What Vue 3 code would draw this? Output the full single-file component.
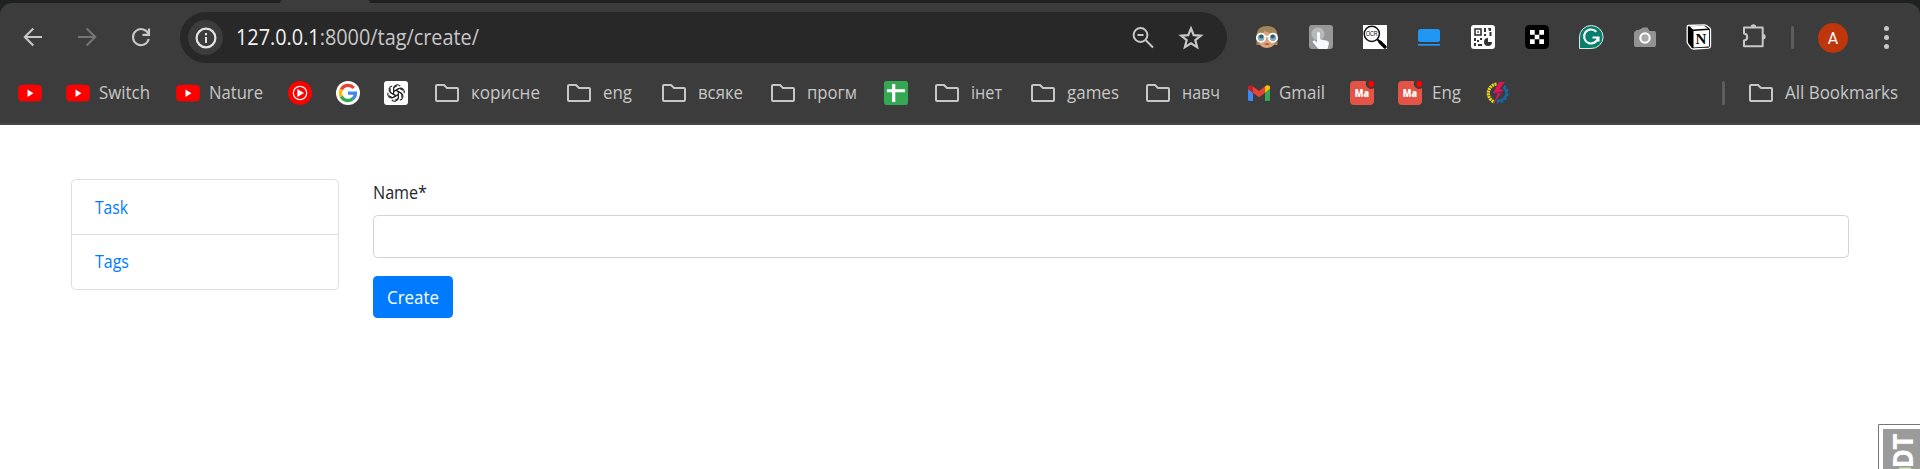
<script setup>
import { h } from 'vue'

// Text run drawn at a fixed advance width; y is the baseline inside the box.
const Label = (p) =>
  h('svg', { width: p.w, height: p.box || 30, style: { display: 'block', overflow: 'visible', flex: 'none' } }, [
    h('text', {
      x: 0, y: p.y || 21, textLength: p.w, lengthAdjust: 'spacingAndGlyphs',
      'font-size': p.size || 17.5, 'font-family': '"Open Sans", "Noto Sans", sans-serif', fill: p.fill || '#c7c7c7',
    }, p.text),
  ])
Label.props = ['w', 'box', 'y', 'size', 'fill', 'text']

const bookmarks = [
  { icon: 'youtube', slot: 48 },
  { icon: 'youtube', text: 'Switch', w: 51, slot: 110 },
  { icon: 'youtube', text: 'Nature', w: 54, slot: 112 },
  { icon: 'music', slot: 48 },
  { icon: 'google', slot: 48 },
  { icon: 'gpt', slot: 51 },
  { icon: 'folder', text: 'корисне', w: 69, slot: 132 },
  { icon: 'folder', text: 'eng', w: 29, slot: 95 },
  { icon: 'folder', text: 'всяке', w: 45, slot: 109 },
  { icon: 'folder', text: 'прогм', w: 50, slot: 113 },
  { icon: 'sheet', slot: 51 },
  { icon: 'folder', text: 'інет', w: 31, slot: 96 },
  { icon: 'folder', text: 'games', w: 52, slot: 115 },
  { icon: 'folder', text: 'навч', w: 38, slot: 102 },
  { icon: 'gmail', text: 'Gmail', w: 46, slot: 102 },
  { icon: 'mate', slot: 48 },
  { icon: 'mate', text: 'Eng', w: 29, slot: 88 },
  { icon: 'gear', slot: 29 },
]
</script>

<template>
  <div class="window">
    <header class="chrome">
      <div class="tabs"><span class="tab"></span></div>
      <div class="panel">
        <div class="toolbar">
          <span class="slot"><svg width="24" height="24" viewBox="0 0 24 24" fill="none" stroke="#c7c7c7" stroke-width="2.1"><path d="M21 12H4.5M12.3 3.5 3.8 12l8.5 8.5" /></svg></span>
          <span class="slot"><svg width="24" height="24" viewBox="0 0 24 24" fill="none" stroke="#757575" stroke-width="2.1"><path d="M3 12h16.5M11.7 3.5l8.5 8.5-8.5 8.5" /></svg></span>
          <span class="slot"><svg width="24" height="24" viewBox="0 0 24 24" fill="none" stroke="#c7c7c7" stroke-width="2.1"><path d="M19.6 9.5A8 8 0 1 0 19.8 14M20 3.5v6.4h-6.5" /></svg></span>
          <div class="omnibox">
            <span class="info"><svg width="24" height="24" viewBox="0 0 24 24"><circle cx="12" cy="12" r="9.4" fill="none" stroke="#e3e3e3" stroke-width="2.2" /><path d="M11 7h2v2.2h-2zM11 11h2v6h-2z" fill="#e3e3e3" /></svg></span>
            <svg class="url" width="243" height="30">
              <text x="0" y="22" textLength="243" lengthAdjust="spacingAndGlyphs" font-size="21" font-family="'Open Sans', 'Noto Sans', sans-serif" fill="#c7c7c7"><tspan fill="#f2f2f2">127.0.0.1</tspan>:8000/tag/create/</text>
            </svg>
            <svg class="zoom" width="24" height="24" viewBox="0 0 24 24" fill="none" stroke="#c7c7c7" stroke-width="2"><circle cx="9.5" cy="9" r="6.9" /><path d="M14.5 14 22 21.500M6.500 9h6" /></svg>
            <svg class="star" width="26" height="26" viewBox="0 0 26 26"><path d="M13 3.400l2.700 6.700 7.100.5-5.500 4.500 1.800 7-6.100-3.800-6.100 3.800 1.800-7-5.500-4.500 7.100-.5z" fill="none" stroke="#c7c7c7" stroke-width="2.200" /></svg>
          </div>
          <div class="extensions">
            <span class="slot"><svg width="24" height="24" viewBox="0 0 24 24">
              <path d="M1.500 20V10C2 4 6 1 12 1s10 3 10.500 9v10h-4z" fill="#a18659" /><path d="M3.500 11c2-1 5-2 6-5 3 2 8 2 11 5v4c0 5-4 8-8.500 8s-8.500-3-8.500-8z" fill="#dca47a" />
              <circle cx="6" cy="12.800" r="4.200" fill="#80aeb8" stroke="#fff" stroke-width="1.700" /><circle cx="18" cy="12.800" r="4.200" fill="#80aeb8" stroke="#fff" stroke-width="1.700" /><path d="M10 11.500h4" stroke="#fff" stroke-width="1.500" /><circle cx="6.300" cy="11.500" r="2" fill="#37576b" /><circle cx="17.700" cy="11.500" r="2" fill="#37576b" /><path d="M9 19q3-1.500 6 0-3 2-6 0" fill="#b84d3e" />
            </svg></span>
            <span class="slot"><svg width="24" height="24" viewBox="0 0 24 24">
              <rect width="24" height="24" rx="3" fill="#979797" /><circle cx="9" cy="9" r="6.500" fill="#b9b9b9" /><path d="M8 8.300a1.500 1.500 0 0 1 3 0v6l7 1.500q2 .5 2 2.500l-1.500 5.700H9.500L4 17.500c-1-1.500.7-2.700 2-1.700L8 17.500z" fill="#f4f8ff" />
            </svg></span>
            <span class="slot"><svg width="24" height="24" viewBox="0 0 24 24">
              <path fill="#fff" d="M0 0h24v24H0z" /><circle cx="8.800" cy="8.800" r="7.600" fill="#fff" stroke="#111" stroke-width="1.500" /><path d="M14.500 14.500l2 2" stroke="#000" stroke-width="2" /><path d="M17 17l5 5" stroke="#000" stroke-width="3.400" stroke-linecap="round" />
              <text x="3" y="11" font-size="6.500" textLength="11.500" lengthAdjust="spacingAndGlyphs" font-family="Liberation Sans, sans-serif">OCR</text>
            </svg></span>
            <span class="slot"><svg width="24" height="24" viewBox="0 0 24 24"><rect x="1" y="4" width="22" height="13" rx="2.500" fill="#2196f3" /><path d="M1 19h22v1.700H1z" fill="#2196f3" /></svg></span>
            <span class="slot"><svg width="24" height="24" viewBox="0 0 24 24">
              <rect width="24" height="24" rx="3" fill="#fff" /><rect x="4" y="4" width="6" height="6" fill="none" stroke="#333" stroke-width="1.600" /><path d="M6.300 6.300h1.500v1.500H6.300zM13 3h2v4h-2zM17 3h3v3h-2M13 9h2v2h-2zM18.500 7h2v4h-2zM3 13h2v3H3zM6 15h2v2H6zM9 13h2v2H9zM3 18h2v3H3zM7 19h4v2H7z" fill="#333" /><path d="M17 17V13a4 4 0 1 0 4 4z" fill="#333" />
            </svg></span>
            <span class="slot"><svg width="24" height="24" viewBox="0 0 24 24"><rect width="24" height="24" rx="4.500" /><path d="M5 5h4.700v4.700H5zM14.300 5H19v4.700h-4.700zM9.700 9.700h4.600v4.600H9.700zM5 14.300h4.700V19H5zM14.300 14.300H19V19h-4.700z" fill="#fff" /></svg></span>
            <span class="slot"><svg width="26" height="26" viewBox="0 0 26 26"><path d="M1.500 24.500V13A11.800 11.500 0 1 1 13 24.500z" fill="#087f6d" stroke="#dce9e5" stroke-width="1" /><path d="M18.300 7.800A7 7 0 1 0 20 13.500H14.500M17 13.500h3.500v4" fill="none" stroke="#fff" stroke-width="2.100" /></svg></span>
            <span class="slot"><svg width="24" height="24" viewBox="0 0 24 24"><path d="M3 5h3l1-1h1l1.500-1.500h5L16.500 6H21q2 0 2 2v12q0 2-2 2H3q-2 0-2-2V8q0-2 2-2z" fill="#929292" /><circle cx="12" cy="13" r="4.700" fill="#aaa" stroke="#fff" stroke-width="2.100" /></svg></span>
            <span class="slot"><svg width="26" height="26" viewBox="0 0 26 26">
              <path d="M2.300 1.500 18 .8q1.500 0 2.500.7l3 2.300q1 .7 1 2V22q0 2-2 2.200l-15 .8q-1.500 0-2.500-1.200l-3-4q-.800-1-.800-2V3q0-1.400 1.100-1.500z" fill="#000" stroke="#fff" stroke-width="1.300" /><path d="M3.500 2.300 18 1.700l4 2.800L7 5.500zM7.500 7l15.500-.900V22.500l-15.500 1z" fill="#fff" />
              <text x="9.500" y="19.500" font-family="Liberation Serif, serif" font-weight="700" font-size="15" textLength="11.500">N</text>
            </svg></span>
            <span class="slot puzzle"><svg width="26" height="26" viewBox="0 0 26 26"><path d="M3 4.500H21.700V23.200H3v-5.700c4.300-.3 4.300-6.700 0-7z" fill="none" stroke="#c7c7c7" stroke-width="2" stroke-linejoin="round" /><path d="M9.700 4a2.700 2.700 0 0 1 5.400 0zM22 11a2.700 2.700 0 0 1 0 5.400z" fill="#c7c7c7" /></svg></span>
          </div>
          <span class="divider"></span>
          <span class="avatar">A</span>
          <span class="menu"><i></i><i></i><i></i></span>
        </div>

        <nav class="bookmarks">
          <a v-for="(b, i) in bookmarks" :key="i" class="bookmark" :class="b.icon" :style="{ width: b.slot + 'px' }">
            <svg v-if="b.icon === 'youtube'" width="24" height="24" viewBox="0 0 24 24"><path d="M3 4Q12 3 21 4q2.300.2 2.600 2.500.6 5.500 0 11Q23.300 20 21 20.200q-9 .8-18 0Q.7 20 .4 17.500q-.6-5.500 0-11Q.7 4.200 3 4z" fill="red" /><path d="M9.500 8.500v7.400l6-3.700z" fill="#fff" /></svg>
            <svg v-else-if="b.icon === 'music'" width="24" height="24" viewBox="0 0 24 24"><circle cx="12" cy="12" r="12" fill="red" /><circle cx="12" cy="12" r="6.700" fill="none" stroke="#fff" stroke-width="1.200" /><path d="M9.300 8v8l6.700-4z" fill="#fff" /></svg>
            <svg v-else-if="b.icon === 'google'" width="24" height="24" viewBox="0 0 24 24"><circle cx="12" cy="12" r="12" fill="#fff" /><g fill="none" stroke-width="3.400"><path d="M17.700 6.900A7.500 7.500 0 0 0 5.300 8.600" stroke="#ea4335" /><path d="M5.300 8.600a7.500 7.500 0 0 0 0 6.800" stroke="#fbbc05" /><path d="M5.300 15.400a7.500 7.500 0 0 0 11.800 2.100" stroke="#34a853" /><path d="M16.800 17.800A7.300 7.300 0 0 0 19.400 12.100H12" stroke="#4285f4" /></g></svg>
            <svg v-else-if="b.icon === 'gpt'" width="24" height="24" viewBox="0 0 24 24"><rect width="24" height="24" rx="3" fill="#fff" /><g fill="none" stroke="#222" stroke-width="1.100" stroke-linejoin="round"><path v-for="n in 6" :key="n" d="M9.600 13.400V7.300a3.700 3.700 0 0 1 6.600-2.100M9.600 10.600l4.800-2.800q1-.6 2 0l2.500 1.500" :transform="`rotate(${n * 60} 12 12)`" /></g></svg>
            <svg v-else-if="b.icon === 'folder'" width="24" height="24" viewBox="0 0 24 24"><path d="M2 4h7l3 3h10q1 0 1 1v11q0 1-1 1H2q-1 0-1-1V5q0-1 1-1z" fill="none" stroke="#c7c7c7" stroke-width="2" /></svg>
            <svg v-else-if="b.icon === 'sheet'" width="24" height="24" viewBox="0 0 24 24"><rect width="24" height="24" rx="2.500" fill="#34a853" /><path d="M3 8.300h18v3H3zM8 3h3.300v18H8z" fill="#fff" /></svg>
            <svg v-else-if="b.icon === 'gmail'" width="22" height="24" viewBox="0 0 22 24"><path d="M0 8l5 3.700V20H1.500Q0 20 0 18.500z" fill="#4285f4" /><path d="M17 11.700 22 8v10.500q0 1.500-1.500 1.500H17z" fill="#34a853" /><path d="M5 5.400l6 4.600 6-4.600v6.300l-6 4.600-6-4.600z" fill="#ea4335" /><path d="M0 6.500C0 3.800 3 3.500 5 5.400v6.300L0 8z" fill="#c5221f" /><path d="M22 6.500c0-2.700-3-3-5-1.100v6.300L22 8z" fill="#fbbc04" /></svg>
            <svg v-else-if="b.icon === 'mate'" width="24" height="24" viewBox="0 0 24 24"><path d="M4 0H16.500a5.300 5.300 0 0 0 7.500 7V20q0 4-4 4H4q-4 0-4-4V4Q0 0 4 0z" fill="#e35446" /><circle cx="21.300" cy="2.900" r="3" fill="#f00" /><text x="4.700" y="16.300" textLength="14.300" lengthAdjust="spacingAndGlyphs" font-size="10.500" font-weight="800" font-family="'Open Sans', sans-serif" fill="#fff">Ma</text></svg>
            <svg v-else width="24" height="24" viewBox="0 0 24 24" fill="none"><path d="M10.500 3a9.300 9.300 0 0 0-2 18" stroke="#ead51a" stroke-width="3.200" stroke-dasharray="2 .7" /><path d="M17.500 6a7.700 7.700 0 0 1-6.500 13.500" stroke="#1768a6" stroke-width="2.500" /><path d="M18.300 4.500a9.700 9.700 0 0 1-7.500 17" stroke="#1768a6" stroke-width="2" stroke-dasharray="2.500 2" /><path d="M13 1h6l-5.500 7 4 1L7.500 22.500l4-9.500-4.500-1z" fill="#dc1850" /><path d="M7.500 13l10-2.500" stroke="#4f286a" stroke-width="1.200" /></svg>
            <Label v-if="b.text" :text="b.text" :w="b.w" />
          </a>
          <span class="rule"></span>
          <a class="bookmark folder all">
            <svg width="24" height="24" viewBox="0 0 24 24"><path d="M2 4h7l3 3h10q1 0 1 1v11q0 1-1 1H2q-1 0-1-1V5q0-1 1-1z" fill="none" stroke="#c7c7c7" stroke-width="2" /></svg>
            <Label text="All Bookmarks" :w="113" />
          </a>
        </nav>
      </div>
    </header>

    <main class="content">
      <ul class="side">
        <li><Label text="Task" :w="33" :y="21.500" :size="17.700" fill="#007bff" /></li>
        <li><Label text="Tags" :w="34" :y="20.500" :size="17.700" fill="#007bff" /></li>
      </ul>
      <form class="form" @submit.prevent>
        <label for="name"><Label text="Name*" :w="54" :y="20" :size="17.700" fill="#212529" /></label>
        <input id="name" type="text" />
        <button type="button"><Label text="Create" :w="52" :y="22" :size="17.700" fill="#fff" /></button>
      </form>
    </main>

    <aside class="debug">
      <svg width="42" height="45" viewBox="0 0 42 45">
        <path d="M.5 45V.5H42" fill="none" stroke="#777" />
        <path d="M5 5h37v40H5z" fill="#9b9b9b" />
        <path d="M21 43.500h12V45H21z" fill="#cfe8b5" />
        <text transform="translate(35 44) rotate(-90)" textLength="34" lengthAdjust="spacingAndGlyphs" font-size="26" font-weight="700" font-family="'DejaVu Sans', sans-serif" fill="#fff">DT</text>
      </svg>
    </aside>
  </div>
</template>

<style>
body { margin: 0; overflow: hidden; background: #fff; }
</style>

<style scoped>
.window { position: relative; width: 1920px; height: 469px; overflow: hidden; background: #fff; font-family: "Open Sans", "Noto Sans", sans-serif; }
.chrome { height: 125px; background: #1f2020; }
.tabs { height: 3px; display: flex; }
.tab { width: 90px; margin-left: 280px; background: #3c3c3c; border-radius: 6px 6px 0 0; }
.panel { height: 122px; box-sizing: border-box; background: #3c3c3c; border-radius: 12px 12px 0 0; border-bottom: 2px solid #484547; }
.toolbar { display: flex; align-items: center; height: 69px; padding-left: 6px; }
.slot { width: 54px; height: 27px; flex: none; display: flex; justify-content: center; align-items: center; }
.toolbar .slot svg { margin-top: -1px; }
.toolbar .puzzle svg { margin-top: -3px; margin-left: 2px; }
.omnibox { display: flex; align-items: center; box-sizing: border-box; width: 1047px; height: 51px; margin: 0 13px 0 12px; padding-left: 8px; border-radius: 26px; background: #282828; flex: none; }
.info { width: 35px; height: 35px; border-radius: 50%; background: #3c3c3c; display: flex; align-items: center; justify-content: center; }
.url { margin-left: 13px; overflow: visible; }
.zoom { margin-left: 652px; }
.star { margin-left: 23px; }
.extensions { display: flex; }
.divider { width: 3px; height: 23px; margin-left: 11px; border-radius: 2px; background: #5d5d5d; }
.avatar { width: 30px; height: 30px; margin-left: 24px; border-radius: 50%; background: #bf360c; color: #fff; text-align: center; font: 16px/31px Roboto, sans-serif; }
.menu { margin-left: 36px; display: flex; flex-direction: column; gap: 4px; }
.menu i { width: 5px; height: 5px; border-radius: 50%; background: #c7c7c7; }
.bookmarks { display: flex; align-items: center; height: 42px; padding-left: 18px; }
.bookmark { display: flex; align-items: center; flex: none; gap: 9px; }
.bookmark > svg { flex: none; }
.folder { gap: 12px; }
.gmail { gap: 9px; }
.mate { gap: 10px; }
.rule { width: 3px; height: 24px; margin-left: 207px; border-radius: 2px; background: #5d5d5d; }
.all { margin-left: 24px; }
.content { display: flex; align-items: flex-start; gap: 34px; padding: 54px 71px 0; }
.side { list-style: none; margin: 0; padding: 0; width: 266px; border: 1px solid #dfdfdf; border-radius: 4.500px; flex: none; }
.side li { height: 54px; display: flex; align-items: center; padding-left: 23px; }
.side li + li { border-top: 1px solid #dfdfdf; }
.form { width: 1476px; flex: none; }
.form label { display: block; height: 36px; box-sizing: border-box; }
.form input { display: block; box-sizing: border-box; width: 1476px; height: 43px; border: 1px solid #ced4da; border-radius: 4.500px; margin: 0 0 18px; outline: none; }
.form button { display: flex; align-items: center; width: 80px; height: 42px; padding: 0 0 0 14px; border: 0; border-radius: 4.500px; background: #007bff; }
.debug { position: absolute; right: 0; bottom: 0; width: 42px; height: 45px; background: #fff; }
.debug svg { display: block; }
</style>
